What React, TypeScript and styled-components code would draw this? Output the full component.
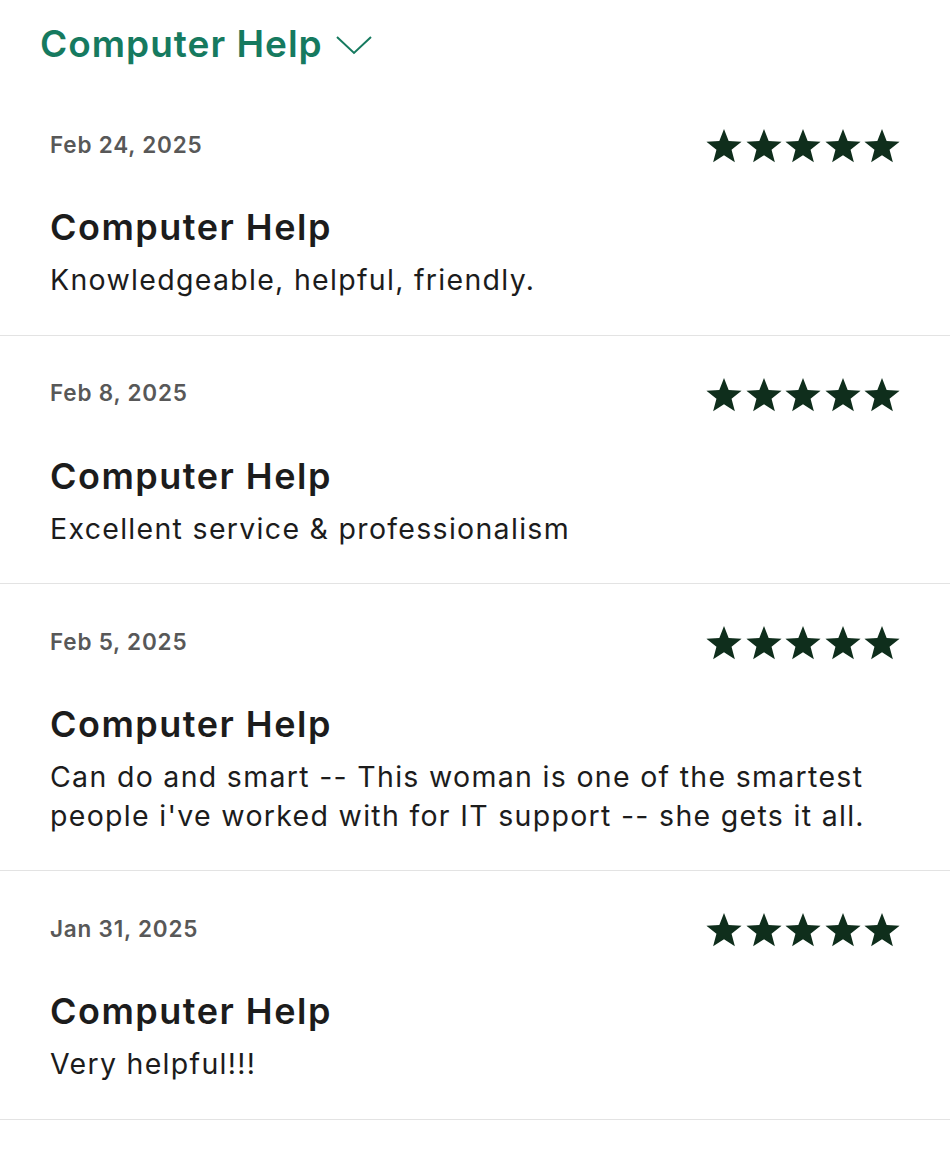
import styled, { createGlobalStyle } from 'styled-components'

const GlobalStyle = createGlobalStyle`
    body {
        margin: 0;
        background: #ffffff;
        font-family: Inter, 'Noto Sans', sans-serif;
    }
`

const reviews = [
    { date: 'Feb 24, 2025', title: 'Computer Help', body: 'Knowledgeable, helpful, friendly.' },
    { date: 'Feb 8, 2025', title: 'Computer Help', body: 'Excellent service & professionalism' },
    {
        date: 'Feb 5, 2025',
        title: 'Computer Help',
        body: "Can do and smart -- This woman is one of the smartest people i've worked with for IT support -- she gets it all.",
    },
    { date: 'Jan 31, 2025', title: 'Computer Help', body: 'Very helpful!!!' },
]

const Page = styled.div`
    width: 950px;
    background: #fff;
`

const Header = styled.div`
    height: 87px;
    display: flex;
    align-items: center;
    gap: 12px;
    padding-left: 40px;
    color: #167a5f;
`

const HeaderTitle = styled.h1`
    margin: 0;
    font-size: 37px;
    font-weight: 600;
    letter-spacing: 1px;
`

const Chevron = styled.svg`
    width: 38px;
    height: 22px;
    margin-top: 2px;
`

const Review = styled.div`
    padding: 40px 49px 35px 50px;
    border-bottom: 1px solid #e3e3e3;
`

const ReviewTop = styled.div`
    display: flex;
    justify-content: space-between;
    align-items: center;
    height: 38px;
`

const DateText = styled.span`
    font-size: 22.5px;
    font-weight: 600;
    color: #585858;
    letter-spacing: 0.8px;
    margin-top: -4px;
`

const Stars = styled.div`
    display: flex;
    gap: 1.5px;
`

const StarIcon = styled.svg`
    width: 38px;
    height: 38px;
    fill: #0f2e1c;
`

const Title = styled.h2`
    margin: 41px 0 12px;
    font-size: 36px;
    line-height: 43px;
    font-weight: 600;
    color: #1c1c1c;
    letter-spacing: 1.5px;
`

const Body = styled.p`
    margin: 0;
    font-size: 28.5px;
    line-height: 38.5px;
    color: #1c1c1c;
    letter-spacing: 1.3px;
    max-width: 850px;
`

const Star = () => (
    <StarIcon viewBox="0 0 24 24">
        <path d="M12 1.2l2.95 7.6 8.15.45-6.33 5.17 2.1 7.9L12 17.9l-6.87 4.42 2.1-7.9L.9 9.25l8.15-.45z" />
    </StarIcon>
)

export default function App() {
    return (
        <Page>
            <GlobalStyle />
            <Header>
                <HeaderTitle>Computer Help</HeaderTitle>
                <Chevron viewBox="0 0 38 22" fill="none" stroke="#167a5f" strokeWidth="2">
                    <path d="M2 3l17 16L36 3" />
                </Chevron>
            </Header>
            {reviews.map((r, i) => (
                <Review key={i}>
                    <ReviewTop>
                        <DateText>{r.date}</DateText>
                        <Stars>
                            {[0, 1, 2, 3, 4].map((s) => (
                                <Star key={s} />
                            ))}
                        </Stars>
                    </ReviewTop>
                    <Title>{r.title}</Title>
                    <Body>{r.body}</Body>
                </Review>
            ))}
        </Page>
    )
}
